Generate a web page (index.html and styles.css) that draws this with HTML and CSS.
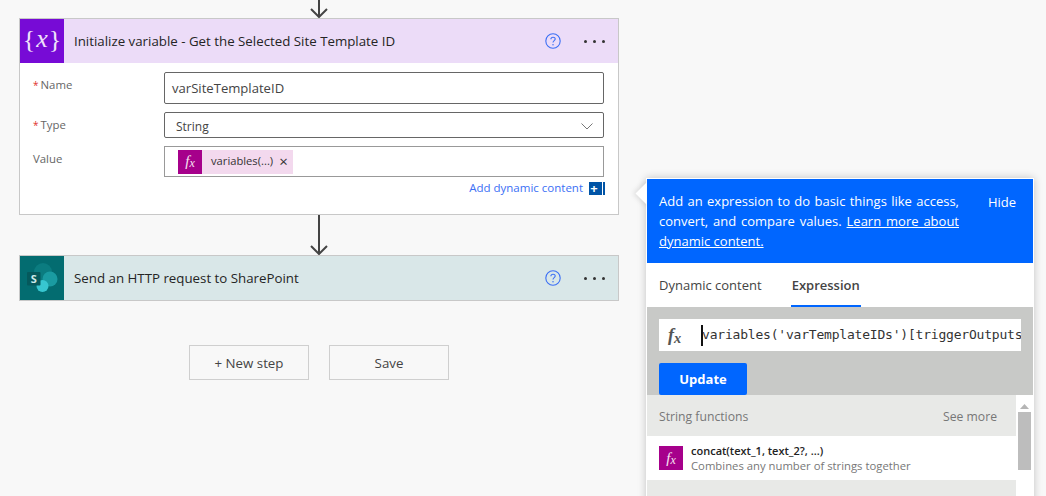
FILE: index.html
```html
<!DOCTYPE html>
<html lang="en">
<head>
<meta charset="utf-8">
<title>Flow designer</title>
<link rel="stylesheet" href="styles.css">
</head>
<body>
<main class="canvas">
  <svg class="arrow arrow-top" width="20" height="18" viewBox="0 0 20 18"><path d="M10 0V17M2 9l8 8 8-8" fill="none" stroke="#444" stroke-width="2"/></svg>
  <section class="card">
    <header class="card-head head-purple">
      <div class="card-icon icon-purple"><span class="brace">{</span><span class="x">x</span><span class="brace">}</span></div>
      <h2 class="card-title">Initialize variable - Get the Selected Site Template ID</h2>
      <svg class="help" width="16" height="16" viewBox="0 0 16 16"><circle cx="8" cy="8" r="7.2" fill="none" stroke="#3b6ff5" stroke-width="1.1"/><path d="M5.9 6.2C5.9 3.6 10.2 3.6 10.2 6c0 1.7-2.2 1.600-2.2 3.600" fill="none" stroke="#3b6ff5" stroke-width="1.1"/><circle cx="8" cy="11.8" r=".75" fill="#3b6ff5"/></svg>
      <div class="dots"><i></i><i></i><i></i></div>
    </header>
    <div class="card-body">
      <div class="row row-name">
        <label class="label"><span class="req">*</span>Name</label>
        <div class="field field-name">varSiteTemplateID</div>
      </div>
      <div class="row row-type">
        <label class="label"><span class="req">*</span>Type</label>
        <div class="field field-type">String
          <svg width="12" height="7" viewBox="0 0 12 7"><path d="M.5.5L6 6 11.500.5" fill="none" stroke="#777" stroke-width="1"/></svg>
        </div>
      </div>
      <div class="row row-value">
        <label class="label">Value</label>
        <div class="field field-value">
          <span class="token"><span class="token-icon fx">f<sub>x</sub></span><span class="token-text">variables(...)</span><span class="token-x">×</span></span>
        </div>
      </div>
      <div class="dyn">
        <span class="dyn-link">Add dynamic content</span>
        <span class="dyn-btn"><span>+</span></span>
      </div>
    </div>
  </section>
  <svg class="arrow arrow-mid" width="20" height="40" viewBox="0 0 20 40"><path d="M10 0V39M2 31l8 8 8-8" fill="none" stroke="#444" stroke-width="2"/></svg>
  <section class="card">
    <header class="card-head head-teal">
      <div class="card-icon icon-teal">
        <svg width="32" height="32" viewBox="0 0 32 32">
          <circle cx="17" cy="10" r="9" fill="#0b7c80"/>
          <circle cx="24" cy="17" r="7.500" fill="#1a9ba1"/>
          <circle cx="16.500" cy="24" r="6" fill="#37c6d0"/>
          <rect x="1" y="10" width="13.500" height="13.500" rx="1" fill="#05595c"/>
          <text x="7.700" y="21" class="sp-s">S</text>
        </svg>
      </div>
      <h2 class="card-title">Send an HTTP request to SharePoint</h2>
      <svg class="help" width="16" height="16" viewBox="0 0 16 16"><circle cx="8" cy="8" r="7.2" fill="none" stroke="#3b6ff5" stroke-width="1.1"/><path d="M5.9 6.2C5.9 3.6 10.2 3.6 10.2 6c0 1.7-2.2 1.600-2.2 3.600" fill="none" stroke="#3b6ff5" stroke-width="1.1"/><circle cx="8" cy="11.8" r=".75" fill="#3b6ff5"/></svg>
      <div class="dots"><i></i><i></i><i></i></div>
    </header>
  </section>
  <div class="actions">
    <button class="btn">+ New step</button>
    <button class="btn">Save</button>
  </div>
</main>

<aside class="popover">
  <div class="pointer"></div>
  <div class="info">
    <p class="info-text">Add an expression to do basic things like access, convert, and compare values. <a class="info-link">Learn more about dynamic content.</a></p>
    <span class="hide">Hide</span>
  </div>
  <nav class="tabs">
    <span class="tab">Dynamic content</span>
    <span class="tab tab-active">Expression</span>
  </nav>
  <div class="expr">
    <div class="expr-input">
      <span class="expr-fx">f<sub>x</sub></span>
      <span class="caret"></span>
      <span class="code">variables('varTemplateIDs')[triggerOutputs()?['body/SiteTemplate']]</span>
    </div>
    <button class="update">Update</button>
  </div>
  <div class="list-wrap">
    <div class="list">
      <div class="list-head"><span>String functions</span><span>See more</span></div>
      <div class="fn">
        <span class="fn-icon fx">f<sub>x</sub></span>
        <div class="fn-text">
          <div class="fn-name">concat(text_1, text_2?, ...)</div>
          <div class="fn-desc">Combines any number of strings together</div>
        </div>
      </div>
    </div>
    <div class="scroll">
      <svg width="9" height="5" viewBox="0 0 9 5"><path d="M0 5L4.500 0 9 5z" fill="#b5b5b5"/></svg>
      <div class="thumb"></div>
    </div>
  </div>
</aside>
</body>
</html>
```
FILE: styles.css
```css
* { box-sizing: border-box; }
html, body { height: 100%; }
body {
  margin: 0;
  background: #f8f8f8;
  font-family: "Open Sans", "Noto Sans", sans-serif;
  color: #333;
  overflow: hidden;
  position: relative;
}
.canvas {
  width: 600px;
  margin-left: 19px;
  display: flex;
  flex-direction: column;
  align-items: stretch;
}
.arrow { display: block; align-self: center; flex: none; }
.card { border: 1px solid #c8c8c8; background: #fff; }
.card-head { display: flex; align-items: center; height: 44px; }
.head-purple { background: #ecdcf8; }
.head-teal { background: #d9e7e8; }
.card-icon {
  width: 44px;
  height: 44px;
  flex: none;
  display: flex;
  align-items: center;
  justify-content: center;
}
.icon-purple { background: #770bd6; color: #efe2fa; font-family: "Liberation Serif", serif; font-weight: 400; }
.icon-teal { background: #036c70; }
.sp-s { font: 700 11px "Open Sans", sans-serif; fill: #cfeaea; text-anchor: middle; }
.brace { font-size: 26px; line-height: 1; padding-bottom: 3px; }
.x { font-style: italic; font-size: 26px; line-height: 1; margin: 0 1px; padding-bottom: 5px; }
.card-title {
  margin: 0 0 0 10px;
  font-size: 13.300px;
  font-weight: 400;
  color: #252525;
  flex: 1;
  white-space: nowrap;
}
.help { flex: none; margin-right: 23px; }
.dots { display: flex; gap: 6px; margin-right: 13px; flex: none; }
.dots i { width: 3px; height: 3px; border-radius: 50%; background: #333; display: block; }

.card-body { padding: 9px 14px 0 13px; height: 151px; }
.row { display: flex; align-items: flex-start; }
.row-type { margin-top: 8px; }
.row-value { margin-top: 8px; }
.label {
  width: 131px;
  flex: none;
  font-size: 11.400px;
  color: #666;
  padding-top: 5px;
  line-height: 16px;
}
.req { color: #e0312e; margin-right: 2px; font-size: 10px; }
.field {
  flex: 1;
  border: 1px solid #666;
  border-radius: 2px;
  background: #fff;
  display: flex;
  align-items: center;
}
.field-name { height: 32px; padding-left: 7px; font-size: 13.100px; color: #444; }
.field-type { height: 26px; padding: 2px 10px 0 11px; font-size: 12px; color: #444; justify-content: space-between; }
.field-value { height: 31px; border-color: #999; border-radius: 0; padding-left: 13px; }
.token { display: flex; align-items: center; height: 24px; background: #f3d9ee; font-size: 11.200px; color: #333; }
.token-icon { width: 24px; height: 24px; }
.token-text { margin-left: 9px; position: relative; top: -1px; }
.token-x { margin: 0 5px 0 6px; font-size: 15px; line-height: 1; }
.fx {
  background: #a6008b;
  color: #f6e3f2;
  font-family: "Liberation Serif", serif;
  font-style: italic;
  font-size: 15px;
  display: flex;
  align-items: center;
  justify-content: center;
}
.fx sub, .expr-fx sub { font-size: .8em; vertical-align: baseline; position: relative; top: 2px; }
.dyn { display: flex; justify-content: flex-end; align-items: center; gap: 6px; margin: 3px -1px 0 0; }
.dyn-link { font-size: 11.500px; line-height: 16px; color: #3b6ff5; }
.dyn-btn {
  width: 16px;
  height: 13px;
  background: #0054a6;
  color: #fff;
  font-size: 13px;
  font-weight: 700;
  line-height: 13px;
  position: relative;
  display: flex;
  justify-content: center;
  padding-right: 3px;
  border-right: 3px solid #0054a6;
}
.dyn-btn::after { content: ""; position: absolute; right: -1px; top: 0; width: 1px; height: 13px; background: #fff; }
.arrow-mid { margin: 0; }
.actions { display: flex; justify-content: center; gap: 20px; margin-top: 44px; }
.btn {
  width: 120px;
  height: 35px;
  border: 1px solid #cfcfcf;
  background: #f8f8f8;
  font: 400 13.300px "Open Sans", "Noto Sans", sans-serif;
  color: #444;
  padding: 0;
}

.popover {
  position: absolute;
  left: 646px;
  top: 178px;
  width: 388px;
  height: 330px;
  background: #fff;
  border: 1px solid #fff;
  box-shadow: 0 0 8px rgba(0, 0, 0, .22);
}
.pointer {
  position: absolute;
  left: -8px;
  top: 6px;
  width: 17px;
  height: 17px;
  transform: rotate(45deg);
  background: #fff;
  box-shadow: -2px 2px 5px rgba(0, 0, 0, .1);
}
.info {
  position: relative;
  background: #0066ff;
  color: #fff;
  height: 84px;
  padding: 12px 12px;
  display: flex;
  justify-content: space-between;
  align-items: flex-start;
  font-size: 13px;
}
.info-text { margin: 0; width: 300px; line-height: 20px; text-align: justify; }
.info-link { text-decoration: underline; }
.hide { margin: 1px 5px 0 0; line-height: 20px; }
.tabs { height: 44px; display: flex; gap: 30px; padding-left: 12px; font-size: 13px; color: #444; }
.tab { display: flex; align-items: center; }
.tab-active { font-weight: 600; box-shadow: inset 0 -2px 0 #0066ff; padding: 0 1px; margin-left: -1px; }
.expr { background: #c8c9c7; height: 88px; padding: 12px 12px 0; }
.expr-input {
  height: 32px;
  width: 362px;
  background: #fff;
  display: flex;
  align-items: center;
  overflow: hidden;
}
.expr-fx {
  width: 42px;
  flex: none;
  padding-left: 9px;
  font: italic 700 18px "Liberation Serif", serif;
  color: #555;
}
.caret { width: 2px; height: 21px; background: #111; flex: none; margin-right: -1px; }
.code { font: 13px/20px "DejaVu Sans Mono", monospace; letter-spacing: -.2px; color: #333; white-space: nowrap; }
.update {
  display: block;
  margin-top: 12px;
  width: 88px;
  height: 32px;
  background: #0066ff;
  color: #fff;
  border: 0;
  border-radius: 2px;
  font: 700 13px "Open Sans", "Noto Sans", sans-serif;
}
.list-wrap { display: flex; height: 101px; }
.list { width: 369px; background: #e8e9e7; flex: none; }
.list-head {
  height: 41px;
  display: flex;
  justify-content: space-between;
  align-items: center;
  padding: 2px 19px 0 12px;
  font-size: 12.200px;
  color: #777;
}
.fn { height: 44px; background: #fff; display: flex; align-items: center; padding-left: 12px; gap: 8px; }
.fn-icon { width: 24px; height: 24px; flex: none; }
.fn-name { font-size: 11px; font-weight: 600; color: #222; line-height: 15px; }
.fn-desc { font-size: 11.300px; color: #777; line-height: 15px; }
.scroll { width: 17px; padding: 9px 2px 0; display: flex; flex-direction: column; align-items: center; background: #fff; }
.thumb { width: 13px; height: 58px; background: #bdbdbd; margin-top: 3px; }
```
